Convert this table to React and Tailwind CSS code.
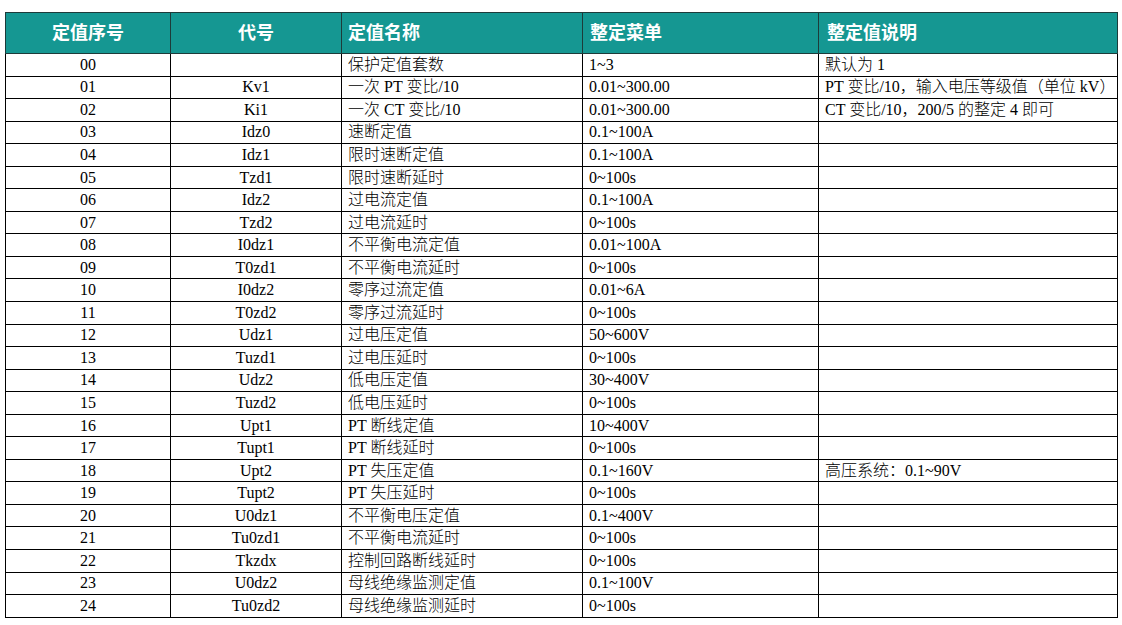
import React from "react";

const rows = [
  ["00", "", "保护定值套数", "1~3", "默认为 1"],
  ["01", "Kv1", "一次 PT 变比/10", "0.01~300.00", "PT 变比/10，输入电压等级值（单位 kV）"],
  ["02", "Ki1", "一次 CT 变比/10", "0.01~300.00", "CT 变比/10，200/5 的整定 4 即可"],
  ["03", "Idz0", "速断定值", "0.1~100A", ""],
  ["04", "Idz1", "限时速断定值", "0.1~100A", ""],
  ["05", "Tzd1", "限时速断延时", "0~100s", ""],
  ["06", "Idz2", "过电流定值", "0.1~100A", ""],
  ["07", "Tzd2", "过电流延时", "0~100s", ""],
  ["08", "I0dz1", "不平衡电流定值", "0.01~100A", ""],
  ["09", "T0zd1", "不平衡电流延时", "0~100s", ""],
  ["10", "I0dz2", "零序过流定值", "0.01~6A", ""],
  ["11", "T0zd2", "零序过流延时", "0~100s", ""],
  ["12", "Udz1", "过电压定值", "50~600V", ""],
  ["13", "Tuzd1", "过电压延时", "0~100s", ""],
  ["14", "Udz2", "低电压定值", "30~400V", ""],
  ["15", "Tuzd2", "低电压延时", "0~100s", ""],
  ["16", "Upt1", "PT 断线定值", "10~400V", ""],
  ["17", "Tupt1", "PT 断线延时", "0~100s", ""],
  ["18", "Upt2", "PT 失压定值", "0.1~160V", "高压系统：0.1~90V"],
  ["19", "Tupt2", "PT 失压延时", "0~100s", ""],
  ["20", "U0dz1", "不平衡电压定值", "0.1~400V", ""],
  ["21", "Tu0zd1", "不平衡电流延时", "0~100s", ""],
  ["22", "Tkzdx", "控制回路断线延时", "0~100s", ""],
  ["23", "U0dz2", "母线绝缘监测定值", "0.1~100V", ""],
  ["24", "Tu0zd2", "母线绝缘监测延时", "0~100s", ""],
];

export default function App() {
  return (
    <div className="w-[1122px] h-[625px] bg-white pt-[12px] pl-[5px]">
      <table
        className="table-fixed border-collapse w-[1112px] text-[16px] text-black leading-none"
        style={{ fontFamily: '"Liberation Serif", "Noto Sans CJK SC", serif' }}
      >
        <colgroup>
          <col className="w-[165px]" />
          <col className="w-[171px]" />
          <col className="w-[241px]" />
          <col className="w-[236px]" />
          <col className="w-[299px]" />
        </colgroup>
        <thead>
          <tr className="h-[41px] bg-[#159792] text-white text-[18px] font-bold" style={{ fontFamily: '"Noto Sans CJK SC", sans-serif' }}>
            <th className="border border-[#1d3b3a] text-center font-bold pb-[4px]">定值序号</th>
            <th className="border border-[#1d3b3a] text-center font-bold pb-[4px]">代号</th>
            <th className="border border-[#1d3b3a] text-left pl-[6px] font-bold pb-[4px]">定值名称</th>
            <th className="border border-[#1d3b3a] text-left pl-[7px] font-bold pb-[4px]">整定菜单</th>
            <th className="border border-[#1d3b3a] text-left pl-[8px] font-bold pb-[4px]">整定值说明</th>
          </tr>
        </thead>
        <tbody className="font-light">
          {rows.map((r) => (
            <tr key={r[0]} className="h-[22.55px]">
              <td className="border border-black text-center p-0">{r[0]}</td>
              <td className="border border-black text-center p-0">{r[1]}</td>
              <td className="border border-black text-left pl-[6px] p-0 whitespace-nowrap">{r[2]}</td>
              <td className="border border-black text-left pl-[6px] p-0 whitespace-nowrap">{r[3]}</td>
              <td className="border border-black text-left pl-[6px] p-0 whitespace-nowrap">{r[4]}</td>
            </tr>
          ))}
        </tbody>
      </table>
    </div>
  );
}
